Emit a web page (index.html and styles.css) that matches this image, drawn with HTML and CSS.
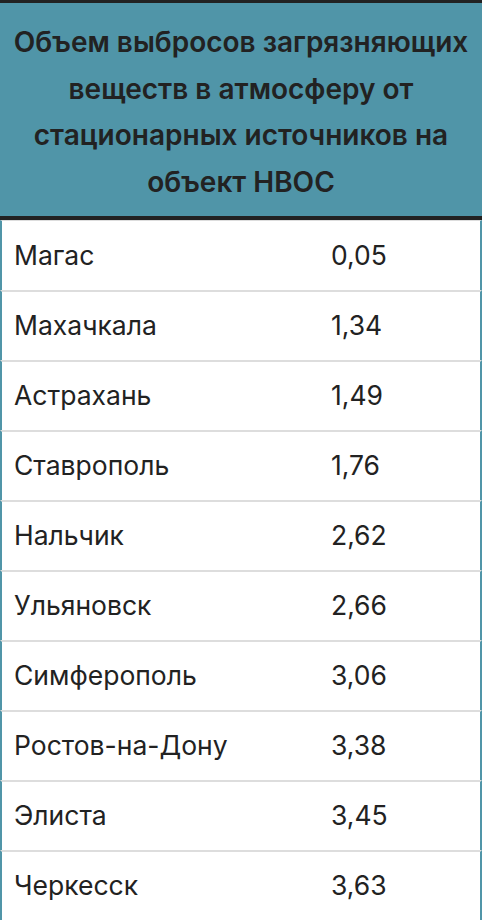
FILE: index.html
```html
<!DOCTYPE html>
<html lang="ru">
<head>
<meta charset="utf-8">
<link rel="stylesheet" href="styles.css">
</head>
<body>
<table class="data">
  <colgroup><col class="c1"><col class="c2"></colgroup>
  <thead>
    <tr><th colspan="2" class="head">Объем выбросов загрязняющих веществ в атмосферу от стационарных источников на объект НВОС</th></tr>
  </thead>
  <tbody>
    <tr><td class="city">Магас</td><td class="val">0,05</td></tr>
    <tr><td class="city">Махачкала</td><td class="val">1,34</td></tr>
    <tr><td class="city">Астрахань</td><td class="val">1,49</td></tr>
    <tr><td class="city">Ставрополь</td><td class="val">1,76</td></tr>
    <tr><td class="city">Нальчик</td><td class="val">2,62</td></tr>
    <tr><td class="city">Ульяновск</td><td class="val">2,66</td></tr>
    <tr><td class="city">Симферополь</td><td class="val">3,06</td></tr>
    <tr><td class="city">Ростов-на-Дону</td><td class="val">3,38</td></tr>
    <tr><td class="city">Элиста</td><td class="val">3,45</td></tr>
    <tr><td class="city">Черкесск</td><td class="val">3,63</td></tr>
  </tbody>
</table>
</body>
</html>
```
FILE: styles.css
```css
html, body {
  margin: 0;
  padding: 0;
  background: #ffffff;
}
body {
  font-family: Inter, "Liberation Sans", sans-serif;
  color: #222222;
}
.data {
  width: 482px;
  border-collapse: separate;
  border-spacing: 0;
  table-layout: fixed;
}
.c1 { width: 319px; }
.c2 { width: 163px; }
.head {
  background: #5095a8;
  border-top: 3px solid #222222;
  border-bottom: 4px solid #222222;
  padding: 16px 6px 11px;
  font-size: 28px;
  line-height: 46.5px;
  font-weight: 600;
  text-align: center;
  color: #222222;
}
.data td {
  height: 66px;
  padding: 0 12px 2px;
  font-size: 26.5px;
  line-height: 32px;
  border-top: 2px solid #dddddd;
  vertical-align: middle;
}
.data tbody tr:first-child td {
  border-top: 1px solid #dddddd;
  height: 67px;
}
.city {
  border-left: 2px solid #5095a8;
}
.val {
  border-right: 2px solid #5095a8;
}
```
